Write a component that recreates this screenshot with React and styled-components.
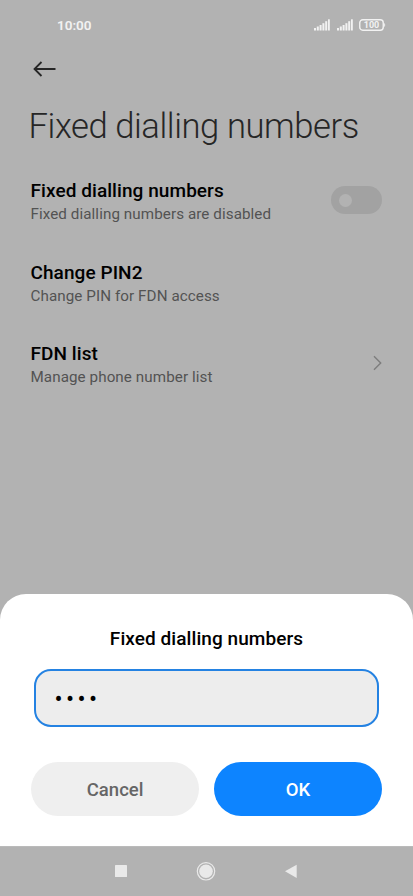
import styled, { createGlobalStyle } from 'styled-components';

const GlobalStyle = createGlobalStyle`
  *, *::before, *::after {
    box-sizing: border-box;
  }

  :root {
    --backdrop: #b2b2b2;
    --light: #e9e9e9;
    --blue: #0d84ff;
  }

  body {
    margin: 0;
    background-color: var(--backdrop);
    font-family: Roboto, 'Liberation Sans', sans-serif;
  }

  h1, h2, p {
    margin: 0;
  }
`;

const Screen = styled.div`
  display: flex;
  flex-direction: column;
  width: 100%;
  height: 896px;
  overflow: hidden;
  background-color: var(--backdrop);
`;

const StatusBar = styled.header`
  display: flex;
  align-items: center;
  justify-content: space-between;
  height: 50px;
  padding: 0 27px 0 57px;
  color: #f2f2f2;
`;

const Time = styled.span`
  font-size: 13.5px;
  font-weight: 600;
  line-height: 16px;
`;

const StatusIcons = styled.div`
  display: flex;
  align-items: center;
  gap: 7px;
`;

const Battery = styled.svg`
  margin-left: -1px;
`;

const Page = styled.main`
  flex: 1;
`;

const BackButton = styled.button`
  display: block;
  height: 38px;
  padding: 2px 0 0;
  margin-left: 33px;
  border: none;
  background: none;
`;

const PageTitle = styled.h1`
  height: 76px;
  padding: 18px 0 0 28.5px;
  font-size: 34.6px;
  font-weight: 300;
  line-height: 40px;
  letter-spacing: -0.42px;
  white-space: nowrap;
  color: #262626;
`;

const Row = styled.div`
  display: flex;
  align-items: center;
  justify-content: space-between;
  height: 81.5px;
  padding: 0 31px 9px 30.5px;
`;

const RowLabel = styled.div`
  padding-top: 4px;
`;

const RowTitle = styled.h2`
  font-size: 19px;
  font-weight: 500;
  line-height: 24px;
  letter-spacing: 0.07px;
  color: #000;
`;

const RowText = styled.p`
  font-size: 15.2px;
  line-height: 22px;
  letter-spacing: 0.08px;
  color: #535353;
`;

const Switch = styled.span`
  display: flex;
  align-items: center;
  width: 51px;
  height: 28px;
  padding-left: 8px;
  border-radius: 14px;
  background-color: #a2a2a2;

  &::before {
    content: '';
    width: 13px;
    height: 13px;
    border-radius: 50%;
    background-color: #b2b2b2;
  }
`;

const Sheet = styled.section`
  height: 252px;
  padding: 32.5px 31px 0;
  border-radius: 26px 26px 0 0;
  background-color: #fff;
`;

const SheetTitle = styled.h2`
  font-size: 19px;
  font-weight: 500;
  line-height: 24px;
  letter-spacing: 0.07px;
  text-align: center;
  color: #000;
`;

const PinField = styled.div`
  display: flex;
  align-items: center;
  height: 58px;
  margin: 18.5px 3px 35px;
  padding: 2px 0 0 18.5px;
  border: 2px solid #2482e2;
  border-radius: 17px;
  background-color: #ededed;
  font-size: 24px;
  line-height: 24px;
  letter-spacing: 3.4px;
  color: #000;
`;

const Actions = styled.div`
  display: flex;
  gap: 14.5px;
`;

const Button = styled.button`
  flex: 1;
  height: 54px;
  padding: 1px 0 0;
  border: none;
  border-radius: 27px;
  font-family: inherit;
  font-size: 18.5px;
  font-weight: 500;
  color: ${({ $primary }) => ($primary ? '#fff' : '#666')};
  background-color: ${({ $primary }) => ($primary ? 'var(--blue)' : '#efefef')};
`;

const NavBar = styled.nav`
  height: 50px;
  border-top: 1px solid #bababa;
`;

function SignalIcon () {
  return (
    <svg width="16" height="12" viewBox="0 0 16 12" fill="#f2f2f2">
      <rect x="0" y="9" width="2" height="2.5" />
      <rect x="2.8" y="7.5" width="2" height="4" />
      <rect x="5.6" y="6" width="2" height="5.5" />
      <rect x="8.4" y="4.2" width="2" height="7.3" />
      <rect x="11.2" y="2.2" width="2" height="9.3" />
      <rect x="14" y="0.3" width="1.8" height="11.2" />
    </svg>
  );
}

function BatteryIcon () {
  return (
    <Battery width="27" height="12" viewBox="0 0 27 12">
      <rect x="0.75" y="0.75" width="23.5" height="10.5" rx="3" fill="none" stroke="#f2f2f2" strokeWidth="1.4" />
      <path d="M25.2 4v4c1.3-.5 1.3-3.5 0-4Z" fill="#f2f2f2" />
      <text x="12.5" y="9.3" fontSize="9" fontWeight="700" textAnchor="middle" fill="#f2f2f2">100</text>
    </Battery>
  );
}

function SettingRow ({ title, text, children }) {
  return (
    <Row>
      <RowLabel>
        <RowTitle>{title}</RowTitle>
        <RowText>{text}</RowText>
      </RowLabel>
      {children}
    </Row>
  );
}

export default function App () {
  return (
    <Screen>
      <GlobalStyle />
      <StatusBar>
        <Time>10:00</Time>
        <StatusIcons>
          <SignalIcon />
          <SignalIcon />
          <BatteryIcon />
        </StatusIcons>
      </StatusBar>
      <Page>
        <BackButton aria-label="Back">
          <svg width="24" height="16" viewBox="0 0 24 16" fill="none" stroke="#262626" strokeWidth="1.8">
            <path d="M22.5 8H1.5M8.5 1 1.5 8l7 7" />
          </svg>
        </BackButton>
        <PageTitle>Fixed dialling numbers</PageTitle>
        <SettingRow title="Fixed dialling numbers" text="Fixed dialling numbers are disabled">
          <Switch />
        </SettingRow>
        <SettingRow title="Change PIN2" text="Change PIN for FDN access" />
        <SettingRow title="FDN list" text="Manage phone number list">
          <svg width="9" height="16" viewBox="0 0 9 16" fill="none" stroke="#7d7d7d" strokeWidth="1.4">
            <path d="m1 1.3 6.7 6.7L1 14.7" />
          </svg>
        </SettingRow>
      </Page>
      <Sheet>
        <SheetTitle>Fixed dialling numbers</SheetTitle>
        <PinField>••••</PinField>
        <Actions>
          <Button>Cancel</Button>
          <Button $primary>OK</Button>
        </Actions>
      </Sheet>
      <NavBar>
        <svg width="413" height="49" viewBox="0 847 413 49" fill="var(--light)">
          <rect x="115" y="865" width="12" height="12" rx="0.5" />
          <circle cx="206" cy="871.3" r="6.8" />
          <circle cx="206" cy="871.3" r="8.7" fill="none" stroke="var(--light)" strokeWidth="1.2" />
          <path d="M285 871.3 296.7 864.7v13.2Z" />
        </svg>
      </NavBar>
    </Screen>
  );
}
